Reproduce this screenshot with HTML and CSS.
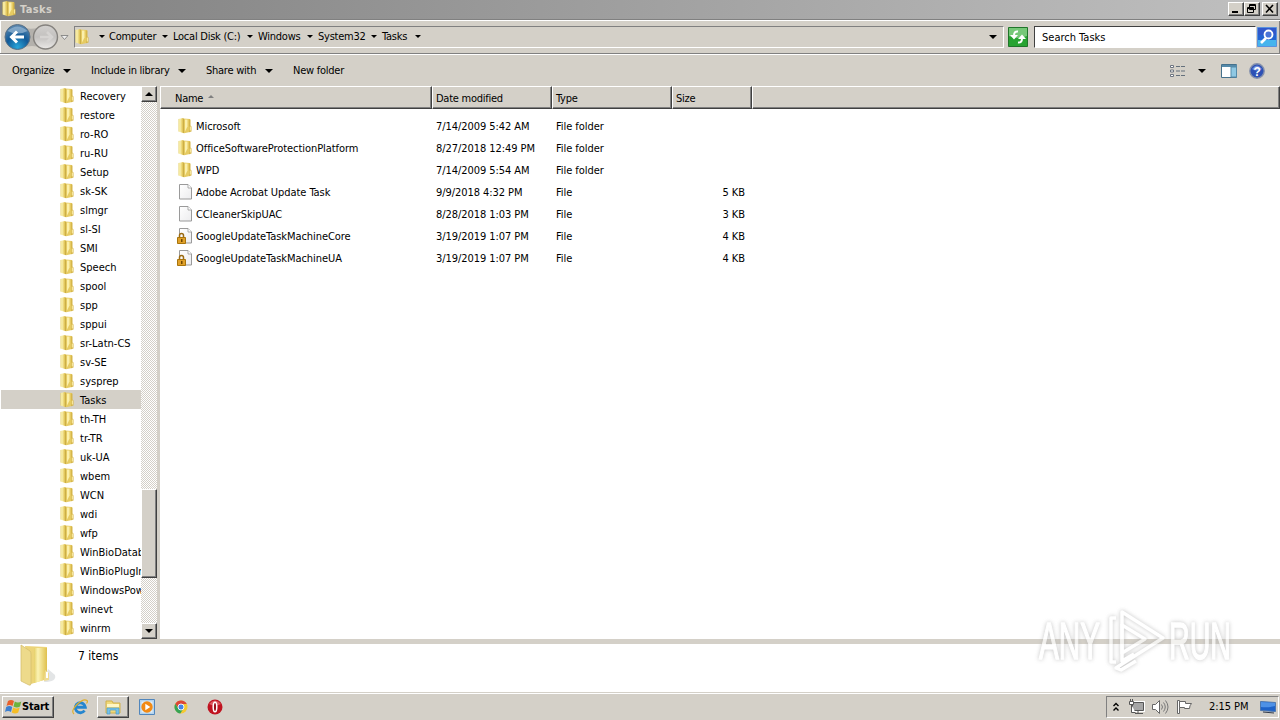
FILE: index.html
```html
<!DOCTYPE html>
<html lang="en">
<head>
    <meta charset="UTF-8">
    <title>Tasks</title>
    <link rel="stylesheet" href="styles.css">
</head>
<body>

<!-- shared icons -->
<svg class="defs" width="0" height="0">
    <defs>
        <linearGradient id="gold" x1="0" x2="1" y1="0" y2="0">
            <stop offset="0" stop-color="#e5cf68"/>
            <stop offset=".3" stop-color="#fbf3b4"/>
            <stop offset="1" stop-color="#dfc04d"/>
        </linearGradient>
        <linearGradient id="paper" x1="0" x2="1" y1="0" y2="1">
            <stop offset="0" stop-color="#fff"/>
            <stop offset="1" stop-color="#ececee"/>
        </linearGradient>
        <radialGradient id="blueBall" cx=".5" cy=".9" r=".9">
            <stop offset="0" stop-color="#2aa6da"/>
            <stop offset=".5" stop-color="#125a98"/>
            <stop offset="1" stop-color="#5d88ae"/>
        </radialGradient>
        <linearGradient id="greyBall" x1="0" x2="0" y1="0" y2="1">
            <stop offset="0" stop-color="#d2d0ce"/>
            <stop offset=".5" stop-color="#c3c1bf"/>
            <stop offset="1" stop-color="#ebe9e7"/>
        </linearGradient>
        <symbol id="folder" viewBox="0 0 16 16">
            <path d="M1.500 1 6 0v15l-4.500-1.500z" fill="url(#gold)"/>
            <path d="M6 .500 13 1v13l-6 1.300-1-.300z" fill="#e6cb62"/>
            <path d="M8 1.500h2.500v7l-2.500 5z" fill="#fbf0ac"/>
            <path d="M12 1.500h1.500v6l1 1v5l-2.500.700z" fill="#d6b64a"/>
            <path d="M12.800 8.500h1v4h-1z" fill="#fff3b0"/>
            <path d="M6.500.500v14.500" stroke="#c4a640" stroke-width=".8"/>
        </symbol>
        <symbol id="file" viewBox="0 0 16 16">
            <path d="M2.500.500h8.500l3.500 3.500v11h-12z" fill="url(#paper)" stroke="#9a9a9a"/>
            <path d="M11 .500V4h3.500" fill="#fff" stroke="#9a9a9a" stroke-width=".8"/>
        </symbol>
        <symbol id="locked" viewBox="0 0 16 16">
            <use href="#file"/>
            <path d="M2.500 10V7.500a2 2 0 0 1 4 0V10" fill="none" stroke="#9a6a12" stroke-width="1.500"/>
            <path d="M.500 9.500h8v6h-8z" fill="#e0a12a" stroke="#a8740c"/>
            <path d="M4 11h1.500v3H4z" fill="#6f4700"/>
        </symbol>
    </defs>
</svg>

<header class="titlebar">
    <svg class="icon" viewBox="0 0 16 16"><use href="#folder"/></svg>
    <h1>Tasks</h1>
    <div class="window-buttons">
        <button class="bevel"><svg width="14" height="12"><path d="M3 8h6v2H3z"/></svg></button>
        <button class="bevel restore"><svg width="14" height="12"><path d="M4.500 1.500h6v5h-6zM4 2.500h7M2.500 4.500h6v5h-6zM2 5.500h7" fill="#d4d0c8" stroke="#000"/></svg></button>
        <button class="bevel"><svg width="14" height="12"><path d="m3 2 7 7.500M10 2 3 9.500" stroke="#000" stroke-width="1.600"/></svg></button>
    </div>
</header>

<nav class="navbar">
    <svg class="travel" width="68" height="28" viewBox="0 0 68 28">
        <path d="M17 3q14 6 28-1v24q-14-6-28 0z" fill="#b4b1ac"/>
        <circle cx="16.500" cy="14" r="12.500" fill="url(#blueBall)" stroke="#5b7084"/>
        <path d="M6.500 8q10-9 20 0-10 5-20 0z" fill="#a9c5dd" opacity=".6"/>
        <path d="M16 8.500 10.500 14l5.500 5.500M11 14h12" fill="none" stroke="#fff" stroke-width="3"/>
        <circle cx="44.500" cy="14" r="12" fill="url(#greyBall)" stroke="#85827e" stroke-width="1.400"/>
        <path d="m46 9 5 5-5 5M39 14h11" fill="none" stroke="#d6d4d2" stroke-width="2.600"/>
        <path d="M60 12.500h7l-3.500 4z" fill="#eee" stroke="#777" stroke-width=".8"/>
    </svg>
    <div class="address">
        <svg class="icon" viewBox="0 0 16 16"><use href="#folder"/></svg>
        <i class="arrow first"></i>
        <span class="crumb c1">Computer</span><i class="arrow"></i>
        <span class="crumb c2">Local Disk (C:)</span><i class="arrow"></i>
        <span class="crumb c3">Windows</span><i class="arrow"></i>
        <span class="crumb c4">System32</span><i class="arrow"></i>
        <span class="crumb c5">Tasks</span><i class="arrow"></i>
        <i class="arrow big history"></i>
    </div>
    <svg class="refresh" width="20" height="20" viewBox="0 0 20 20">
        <path d="M.500.500h19v19H.500z" fill="#27a331" stroke="#20752a"/>
        <path d="M1 1h18v8q-9 4-18 0z" fill="#76c878"/>
        <path d="M10 4.500q-4-.500-4 4M10 15.500q4 .500 4-4" fill="none" stroke="#fff" stroke-width="2"/>
        <path d="M2 8h8l-4 4.500zM10 12h8l-4-4.500z" fill="#fff"/>
    </svg>
    <div class="search">Search Tasks</div>
    <svg class="search-button" width="20" height="20" viewBox="0 0 20 20">
        <path d="M.500.500h19v19H.500z" fill="#2364d2" stroke="#5a92dd"/>
        <path d="M1 13h18v6H1z" fill="#45b4ed"/>
        <path d="M1 1h18v7H1z" fill="#3158cb"/>
        <path d="m9 11-5 5" stroke="#fff" stroke-width="2.600"/>
        <circle cx="11.500" cy="7.500" r="4" fill="#4a74d8" stroke="#fff" stroke-width="1.800"/>
    </svg>
</nav>

<div class="toolbar">
    <span class="t1">Organize</span><i class="arrow big"></i>
    <span class="t2">Include in library</span><i class="arrow big"></i>
    <span class="t3">Share with</span><i class="arrow big"></i>
    <span class="t4">New folder</span>
    <div class="toolbar-icons">
        <svg width="16" height="14" viewBox="0 0 16 14">
            <path d="M.500 1.500h3v2h-3zM.500 6h3v2h-3zM.500 10.500h3v2h-3z" fill="#fff" stroke="#6d7480"/>
            <path d="M6 2.500h4m1 0h4M6 7h4m1 0h4M6 11.500h4m1 0h4" stroke="#64707c"/>
        </svg>
        <i class="arrow big"></i>
        <svg class="pane" width="17" height="14" viewBox="0 0 17 14">
            <path d="M.500.500h15v13H.500z" fill="#fff" stroke="#45718c"/>
            <path d="M1 1h15v2H1z" fill="#548aaa"/>
            <path d="M10 3h5.500v10H10z" fill="#8fc8e3" stroke="#568ba9"/>
        </svg>
        <svg class="help" width="16" height="16" viewBox="0 0 16 16">
            <circle cx="8" cy="8" r="7.200" fill="#2d51b5" stroke="#8490ac" stroke-width="1.400"/>
            <path d="M3 6q5-7 10 0-5 3-10 0z" fill="#6f8ddc"/>
            <text x="8" y="12.500" text-anchor="middle">?</text>
        </svg>
    </div>
</div>

<main class="explorer">
    <aside class="tree">
        <ul id="tree"></ul>
    </aside>
    <div class="scrollbar">
        <button class="bevel"><i class="arrow big up"></i></button>
        <div class="thumb bevel"></div>
        <button class="bevel"><i class="arrow big"></i></button>
    </div>
    <section class="list">
        <div class="columns">
            <div>Name <i class="sort"></i></div>
            <div>Date modified</div>
            <div>Type</div>
            <div>Size</div>
            <div></div>
        </div>
        <div id="files"></div>
    </section>
</main>

<footer class="details">
    <svg width="40" height="44" viewBox="0 0 40 44">
        <path d="M24 38q13 0 11-7l-7-6z" fill="#e3e5e6"/>
        <path d="m5 2 22 1v32L11 40z" fill="#ecd478"/>
        <path d="M14 4h13v31l-13 4z" fill="url(#gold)"/>
        <path d="m1 1 9 6q1 1 1 3v29q0 3-2 2l-8-4z" fill="#edda8b" stroke="#d6bf70" stroke-width=".8"/>
        <path d="m25 26 4 3v7l-5 1z" fill="#efdc93"/>
        <path d="M26 28h2v6h-2z" fill="#fff"/>
    </svg>
    <span>7 items</span>
</footer>

<div class="taskbar">
    <button class="start bevel">
        <svg width="17" height="16" viewBox="0 0 17 16">
            <path d="M3 2q3-2 6 0L7.500 7q-3-2-6 0z" fill="#e8602c"/>
            <path d="M9.800 2.500q3 2 6.500 0L15 7.500q-3 2-6.500 0z" fill="#6cb33e"/>
            <path d="M1.200 8q3-2 6 0L6 13q-3-2-6 0z" fill="#3c7fd0"/>
            <path d="M8.200 8.500q3 2 6.500 0l-1.500 5q-3 2-6.500 0z" fill="#f5bd26"/>
        </svg>Start
    </button>
    <svg class="ie" width="16" height="16" viewBox="0 0 16 16">
        <path d="M12.500 11.500a5 5 0 1 1 .800-3.300H4.500" fill="none" stroke="#2586cf" stroke-width="2.900"/>
        <path d="M2 15Q-1.500 12 5 5.500T15 1.500q1 1-.500 3" fill="none" stroke="#dfae2b" stroke-width="1.200"/>
    </svg>
    <button class="running bevel">
        <svg width="16" height="16" viewBox="0 0 16 16">
            <path d="M1 2h6l1 2h7v10H1z" fill="#f0d97a" stroke="#d0b04b"/>
            <path d="M2 5h12v3H2z" fill="#fff6c4"/>
            <path d="M2 9h12v6h-3v-4H5v4H2z" fill="#76c2e8" stroke="#4a9cca" stroke-width=".7"/>
        </svg>
    </button>
    <svg class="wmp" width="16" height="16" viewBox="0 0 16 16">
        <path d="M.500.500h15v15H.500z" fill="#b4d4ee" stroke="#5186bc"/>
        <path d="M2.500 2.500h11v11h-11z" fill="#e3eef8"/>
        <circle cx="8" cy="8" r="5.700" fill="#f28a14"/>
        <path d="m6.300 4.800 5 3.200-5 3.200z" fill="#fff"/>
    </svg>
    <svg class="chrome" width="14" height="14" viewBox="0 0 14 14">
        <circle cx="7" cy="7" r="6.500" fill="#f5c932"/>
        <path d="M1.300 3.800A6.500 6.500 0 0 1 12.800 4H7L4.400 8.500z" fill="#dd4637"/>
        <path d="M1.300 3.800a6.500 6.500 0 0 0 5 9.700L9.500 8.500H4.400z" fill="#36a355"/>
        <circle cx="7" cy="7" r="3" fill="#4684e8" stroke="#fff" stroke-width=".9"/>
    </svg>
    <svg class="opera" width="16" height="16" viewBox="0 0 16 16">
        <circle cx="8" cy="8" r="7.500" fill="#c01320"/>
        <path d="M2 5q6-7 12 0-6 3-12 0z" fill="#dd5960"/>
        <ellipse cx="8" cy="8" rx="1.800" ry="4.800" fill="#981019" stroke="#fff" stroke-width="1.500"/>
    </svg>
    <div class="tray">
        <svg width="8" height="11" viewBox="0 0 8 11"><path d="m1.500 4 2.500-2.500L6.500 4m-5 4.500L4 6l2.500 2.500" fill="none" stroke="#000" stroke-width="1.400"/></svg>
        <svg class="net" width="17" height="16" viewBox="0 0 17 16">
            <path d="M4.500 3.500h11v8h-11z" fill="#999" stroke="#fff" stroke-width="3"/>
            <path d="M4.500 3.500h11v8h-11z" fill="#a5a5a5" stroke="#555"/>
            <path d="M7 14.500h8M10 12v2" stroke="#555"/>
            <path d="M1.500 2.500h4v3h-4zM2.500 0v2m2-2v2M3.500 6v7.500h4" fill="#fff" stroke="#555"/>
        </svg>
        <svg class="sound" width="17" height="16" viewBox="0 0 17 16">
            <path d="M.500 5.500h3l4-4v13l-4-4h-3z" fill="#fff" stroke="#666"/>
            <path d="M9.500 5.500q2 2.500 0 5m2-7q3.500 4.500 0 9m2-11q5 6.500 0 13" fill="none" stroke="#777"/>
        </svg>
        <svg class="flag" width="17" height="16" viewBox="0 0 17 16">
            <path d="M1.500 1.500h2v13h-2z" fill="#fff" stroke="#666"/>
            <path d="M3.500 2.500h6v2h6q-2 2-2 5h-5v-1h-5z" fill="#fff" stroke="#666"/>
        </svg>
        <time>2:15 PM</time>
        <svg class="desktop" width="16" height="14" viewBox="0 0 16 14">
            <path d="M.500 1.500 15.500 2.500v9L.500 10.500z" fill="#1e62c8" stroke="#4e77ae"/>
            <path d="m1 2 14 1v3Q8 8 1 7z" fill="#4e91e6"/>
            <path d="m3 12 11 1" stroke="#303a4c"/>
        </svg>
    </div>
</div>

<!-- watermark floats over the window -->
<svg class="watermark" width="210" height="76" viewBox="0 0 210 76">
    <g class="mark">
        <text x="9" y="56" textLength="61" lengthAdjust="spacingAndGlyphs">ANY</text>
        <text x="139" y="56" textLength="62" lengthAdjust="spacingAndGlyphs">RUN</text>
        <path d="M86 15h-5v44h5"/>
        <path d="M104 51 92 58V9l41 26-41 26-6 4 5 2 15-9"/>
        <path d="M92 22v28l23-14z"/>
    </g>
</svg>

<script>
    var folders = ["Recovery", "restore", "ro-RO", "ru-RU", "Setup", "sk-SK", "slmgr", "sl-SI", "SMI", "Speech",
        "spool", "spp", "sppui", "sr-Latn-CS", "sv-SE", "sysprep", "Tasks", "th-TH", "tr-TR", "uk-UA", "wbem",
        "WCN", "wdi", "wfp", "WinBioDatabase", "WinBioPlugIns", "WindowsPowerShell", "winevt", "winrm", ""];

    var files = [
        ["folder", "Microsoft", "7/14/2009 5:42 AM", "File folder", ""],
        ["folder", "OfficeSoftwareProtectionPlatform", "8/27/2018 12:49 PM", "File folder", ""],
        ["folder", "WPD", "7/14/2009 5:54 AM", "File folder", ""],
        ["file", "Adobe Acrobat Update Task", "9/9/2018 4:32 PM", "File", "5 KB"],
        ["file", "CCleanerSkipUAC", "8/28/2018 1:03 PM", "File", "3 KB"],
        ["locked", "GoogleUpdateTaskMachineCore", "3/19/2019 1:07 PM", "File", "4 KB"],
        ["locked", "GoogleUpdateTaskMachineUA", "3/19/2019 1:07 PM", "File", "4 KB"]
    ];

    function icon(name) {
        return `<svg class="icon" viewBox="0 0 16 16"><use href="#${name}"/></svg>`;
    }

    document.getElementById("tree").innerHTML = folders.map(function (name) {
        return `<li class="${name === "Tasks" ? "selected" : ""}">${icon("folder")}<span>${name}</span></li>`;
    }).join("");

    document.getElementById("files").innerHTML = files.map(function (f) {
        return `<div class="row"><div class="name">${icon(f[0])}<span>${f[1]}</span></div>
                <div class="date">${f[2]}</div><div>${f[3]}</div><div class="size">${f[4]}</div></div>`;
    }).join("");
</script>

</body>
</html>
```

FILE: styles.css
```css
* {
    box-sizing: border-box;
}

body {
    margin: 0;
    width: 1280px;
    height: 720px;
    overflow: hidden;
    display: flex;
    flex-direction: column;
    background: #d4d0c8;
    color: #000;
    font: 11px/14px "DejaVu Sans Condensed", "DejaVu Sans", sans-serif;
    font-stretch: condensed;
    letter-spacing: -0.25px;
    white-space: nowrap;
}

svg {
    display: block;
    flex: none;
}

.defs {
    position: absolute;
}

.icon {
    width: 16px;
    height: 16px;
}

button {
    padding: 0;
    font: inherit;
    color: #000;
}

.bevel {
    background: #d4d0c8;
    border: 1px solid;
    border-color: #fff #404040 #404040 #fff;
    box-shadow: inset -1px -1px #808080;
}

.arrow {
    flex: none;
    width: 0;
    border: 3px solid transparent;
    border-top-color: #000;
    border-bottom: 0;
}

.arrow.big {
    border-width: 4px 4px 0;
}

.arrow.up {
    transform: rotate(180deg);
}

/* title bar */
.titlebar {
    height: 19px;
    flex: none;
    display: flex;
    align-items: center;
    padding: 0 2px 1px 1px;
    background: linear-gradient(to right, #808080, #c0c0c0);
}

.titlebar h1 {
    margin: 1px 0 0 3px;
    color: #d4d0c8;
    font-size: 11px;
    letter-spacing: 0.4px;
}

.window-buttons {
    display: flex;
    margin-left: auto;
}

.window-buttons button {
    width: 16px;
    height: 14px;
}

.window-buttons .restore {
    margin-right: 2px;
}

/* address row */
.navbar {
    height: 35px;
    flex: none;
    display: flex;
    align-items: center;
    padding-left: 1px;
    border-top: 1px solid #808080;
    border-bottom: 1px solid #808080;
    box-shadow: inset 1px 1px #fff, inset -1px 0 #808080;
}

.address {
    width: 930px;
    height: 22px;
    margin-left: 5px;
    display: flex;
    align-items: center;
    border: 1px solid;
    border-color: #808080 #fff #fff #808080;
}

.address .icon {
    margin-left: -1px;
}

.address .first {
    margin: 0 4px 0 9px;
}

.crumb + .arrow {
    margin-right: 5px;
}

.c1 { width: 53px; }
.c2 { width: 74px; }
.c3 { width: 49px; }
.c4 { width: 53px; }
.c5 { width: 33px; }

.address .history {
    margin: 0 6px 0 auto;
}

.refresh {
    margin-left: 4px;
}

.search {
    width: 222px;
    height: 22px;
    margin: 0 1px 0 6px;
    padding: 4px 7px;
    background: #fff;
    border: 1px solid;
    border-color: #404040 #fff #fff #404040;
    letter-spacing: 0;
}

/* toolbar */
.toolbar {
    height: 32px;
    flex: none;
    display: flex;
    align-items: center;
    padding-left: 12px;
    border-top: 1px solid #fff;
}

.t1 { width: 51px; }
.t2 { width: 87px; margin-left: 20px; }
.t3 { width: 59px; margin-left: 20px; }
.t4 { margin-left: 20px; }

.toolbar-icons {
    display: flex;
    align-items: center;
    margin: 0 15px 0 auto;
}

.toolbar-icons .arrow {
    margin: 0 15px 0 12px;
}

.help {
    margin-left: 11px;
}

.help text {
    font: bold 12px "Liberation Sans", sans-serif;
    fill: #fff;
}

/* explorer body */
.explorer {
    height: 553px;
    flex: none;
    display: flex;
    background: #fff;
}

.tree {
    width: 141px;
    overflow: hidden;
    letter-spacing: 0;
}

.tree ul {
    margin: 0;
    padding: 0 0 0 1px;
    list-style: none;
}

.tree li {
    height: 19px;
    display: flex;
    align-items: center;
    padding-left: 58px;
}

.tree li span {
    margin: 2px 0 0 5px;
}

.selected {
    background: #d4d0c8;
}

.scrollbar {
    width: 19px;
    flex: none;
    display: flex;
    flex-direction: column;
    border-right: 3px solid #d4d0c8;
    background: repeating-conic-gradient(#d4d0c8 0 25%, #fff 0 50%) 0 0 / 2px 2px;
}

.scrollbar button {
    height: 16px;
    display: flex;
    align-items: center;
    justify-content: center;
}

.scrollbar .thumb {
    height: 89px;
    margin: 387px 0 45px;
}

.list {
    flex: 1;
}

.columns {
    height: 23px;
    display: flex;
    margin-bottom: 6px;
}

.columns div {
    width: 120px;
    padding: 5px 3px;
    background: #d4d0c8;
    border: 1px solid;
    border-color: #fff #404040 #404040 #fff;
    box-shadow: inset -1px -1px #808080;
}

.columns div:first-child {
    width: 272px;
    padding-left: 14px;
}

.columns div:nth-child(4) {
    width: 80px;
}

.columns div:last-child {
    flex: 1;
}

.sort {
    display: inline-block;
    margin: 0 0 4px 2px;
    border: 3px solid transparent;
    border-top: 0;
    border-bottom-color: #808080;
}

.row {
    height: 22px;
    display: grid;
    grid-template-columns: 276px 120px 120px 69px;
    align-items: center;
    padding-top: 1px;
    letter-spacing: -0.06px;
}

.name {
    display: flex;
    align-items: center;
    padding-left: 17px;
}

.name .icon {
    margin-top: -2px;
}

.name span {
    margin-left: 3px;
}

.size {
    text-align: right;
}

/* details pane */
.details {
    height: 54px;
    flex: none;
    display: flex;
    padding-left: 20px;
    background: #fff;
    border-top: 5px solid #d4d0c8;
    border-bottom: 1px solid #d4d0c8;
}

.details span {
    margin: 5px 0 0 18px;
    font-size: 12px;
    letter-spacing: 0;
}

/* taskbar */
.taskbar {
    height: 27px;
    flex: none;
    display: flex;
    align-items: center;
    border-top: 1px solid #fff;
    padding-left: 2px;
}

.start {
    width: 52px;
    height: 22px;
    display: flex;
    align-items: center;
    padding-left: 2px;
    font-weight: bold;
    letter-spacing: -0.2px;
}

.ie {
    margin-left: 18px;
}

.running {
    width: 32px;
    height: 22px;
    margin: 0 10px 0 9px;
    padding-left: 7px;
}

.chrome {
    margin: 0 19px 0 19px;
}

.tray {
    width: 173px;
    height: 22px;
    margin: 0 1px 0 auto;
    padding-left: 5px;
    display: flex;
    align-items: center;
    border: 1px solid;
    border-color: #808080 #fff #fff #808080;
}

.net { margin-left: 8px; }
.sound { margin-left: 7px; }
.flag { margin-left: 7px; }

.tray time {
    width: 40px;
    margin-left: 16px;
    letter-spacing: -0.05px;
}

.desktop {
    margin-left: 11px;
}

.watermark {
    position: absolute;
    left: 1030px;
    top: 603px;
}

.mark {
    fill: none;
    stroke: #fff;
    stroke-width: 3.5;
    stroke-linejoin: round;
    opacity: 0.7;
    filter: drop-shadow(0 0 2px #aaa);
}

.mark text {
    font: 51px "Liberation Sans", sans-serif;
    letter-spacing: 0;
    fill: #fff;
    stroke-width: 1.5;
}
```
